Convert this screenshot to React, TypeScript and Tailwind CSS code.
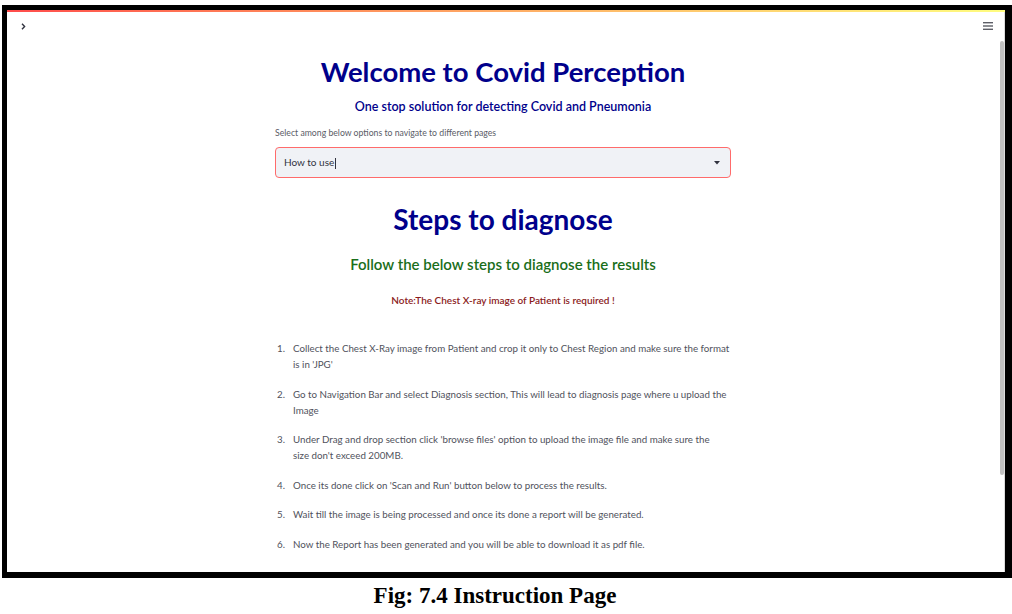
import React from 'react';

const steps = [
  "Collect the Chest X-Ray image from Patient and crop it only to Chest Region and make sure the format is in 'JPG'",
  'Go to Navigation Bar and select Diagnosis section, This will lead to diagnosis page where u upload the Image',
  "Under Drag and drop section click 'browse files' option to upload the image file and make sure the size\u00a0don't exceed 200MB.",
  "Once its done click on 'Scan and Run' button below to process the results.",
  'Wait till the image is being processed and once its done a report will be generated.',
  'Now the Report has been generated and you will be able to download it as pdf file.',
];

const App: React.FC = () => {
  return (
    <div className="w-[1012px] h-[614px] bg-white overflow-hidden font-['Lato',sans-serif]">
      <div className="ml-[2px] mt-[5px] w-[1010px] h-[573px] border-l-[5px] border-t-[5px] border-r-[7px] border-b-[6px] border-black flex flex-col">
        <div className="h-[2px] bg-linear-to-r from-[#ff4b4b] to-[#fffd80]" />
        <div className="flex-1 flex min-h-0">
          <main className="relative flex-1 flex flex-col items-center">
            <svg className="absolute left-[14px] top-[11px] w-[5px] h-[7px]" viewBox="0 0 5 7" fill="none">
              <path d="M1 0.8l2.6 2.7L1 6.2" stroke="#31333f" strokeWidth={1.4} />
            </svg>
            <svg className="absolute right-[6px] top-[10px] w-[10px] h-[8px]" viewBox="0 0 10 8">
              <rect x="0" y="0" width="10" height="1.4" fill="#5c5e66" />
              <rect x="0" y="3.3" width="10" height="1.4" fill="#5c5e66" />
              <rect x="0" y="6.6" width="10" height="1.4" fill="#5c5e66" />
            </svg>

            <div className="w-[456px] pt-[42px]">
              <h1 className="text-center text-[27.5px] leading-[36px] font-bold text-[#00008b]">
                Welcome to Covid Perception
              </h1>
              <h3 className="mt-[7px] text-center text-[12.5px] leading-[20px] font-semibold text-[#00008b]">
                One stop solution for detecting Covid and Pneumonia
              </h3>
              <p className="mt-[9px] text-[8.7px] leading-[14px] text-[#5a5c66]">
                Select among below options to navigate to different pages
              </p>
              <div className="mt-[7px] h-[31px] rounded-[4px] border border-[#ff6b6b] bg-[#f0f2f6] flex items-center justify-between pl-[8px] pr-[10px]">
                <span className="text-[10px] text-[#31333f]">
                  How to use<span className="inline-block w-px h-[11px] bg-[#31333f] align-middle ml-px" />
                </span>
                <svg className="w-[6px] h-[4px]" viewBox="0 0 6 4">
                  <path d="M0 0h6L3 3.5z" fill="#31333f" />
                </svg>
              </div>

              <h1 className="mt-[23px] text-center text-[28px] leading-[36px] font-bold text-[#00008b]">
                Steps to diagnose
              </h1>
              <h3 className="mt-[16px] text-center text-[15px] leading-[22px] font-semibold text-[#1a6e1a]">
                Follow the below steps to diagnose the results
              </h3>
              <p className="mt-[18px] text-center text-[10px] leading-[14px] font-semibold text-[#8b1c1c]">
                Note:The Chest X-ray image of Patient is required !
              </p>

              <ol className="mt-[33px] flex flex-col gap-[13.5px]">
                {steps.map((s, i) => (
                  <li key={i} className="flex text-[9.75px] leading-[16px] text-[#50525c]">
                    <span className="w-[18px] shrink-0 pl-[2px]">{i + 1}.</span>
                    <span>{s}</span>
                  </li>
                ))}
              </ol>
            </div>
          </main>
          <div className="w-[5px] pt-[29px] pl-px">
            <div className="w-[4px] h-[434px] rounded-full bg-[#c1c1c1]" />
          </div>
          <div className="w-px bg-[#dcdcdc]" />
        </div>
      </div>
      <div className="mt-[5px] pr-[22px] text-center font-['Liberation_Serif',serif] font-bold text-[23px] leading-[26px] text-black">
        Fig: 7.4 Instruction Page
      </div>
    </div>
  );
};

export default App;
